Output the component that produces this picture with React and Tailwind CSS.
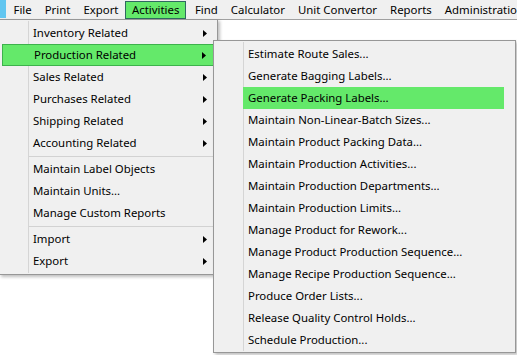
import React from "react";

const topMenu = ["File", "Print", "Export", "Activities", "Find", "Calculator", "Unit Convertor", "Reports", "Administration"];

const activities = [
  { label: "Inventory Related", sub: true },
  { label: "Production Related", sub: true, active: true },
  { label: "Sales Related", sub: true },
  { label: "Purchases Related", sub: true },
  { label: "Shipping Related", sub: true },
  { label: "Accounting Related", sub: true },
  { sep: true },
  { label: "Maintain Label Objects" },
  { label: "Maintain Units..." },
  { label: "Manage Custom Reports" },
  { sep: true },
  { label: "Import", sub: true },
  { label: "Export", sub: true },
];

const production = [
  "Estimate Route Sales...",
  "Generate Bagging Labels...",
  "Generate Packing Labels...",
  "Maintain Non-Linear-Batch Sizes...",
  "Maintain Product Packing Data...",
  "Maintain Production Activities...",
  "Maintain Production Departments...",
  "Maintain Production Limits...",
  "Manage Product for Rework...",
  "Manage Product Production Sequence...",
  "Manage Recipe Production Sequence...",
  "Produce Order Lists...",
  "Release Quality Control Holds...",
  "Schedule Production...",
];

const Arrow = () => (
  <svg width="4" height="7" viewBox="0 0 4 7" className="ml-auto">
    <path d="M0 0 L4 3.5 L0 7 Z" fill="#000" />
  </svg>
);

const App = () => {
  return (
    <div
      className="w-[517px] h-[355px] overflow-hidden bg-white text-black text-[11.4px] leading-none relative"
      style={{ fontFamily: '"Segoe UI", "Noto Sans", sans-serif' }}
    >
      {/* menu bar */}
      <div className="h-[20px] bg-[#f0f0f0] border-b border-[#a0a0a0] flex items-stretch">
        <div className="shrink-0 w-[6px] h-[18px] bg-[#62c6f0]" />
        <div className="flex items-stretch pt-[1px] pl-[1px] whitespace-nowrap">
          {topMenu.map((m) =>
            m === "Activities" ? (
              <div
                key={m}
                className="flex items-center px-[6px] mr-[2px] bg-[#64e96a] border border-[#2f6a60] h-[18px]"
              >
                {m}
              </div>
            ) : (
              <div key={m} className="flex items-center px-[6.5px] h-[18px]">
                {m}
              </div>
            )
          )}
        </div>
      </div>

      {/* activities dropdown */}
      <div className="absolute left-[-1px] top-[19px] w-[219px] bg-[#f0f0f0] border border-[#979797] p-[2px] shadow-[2px_2px_3px_rgba(0,0,0,0.25)]">
        <div className="absolute left-[28px] top-[1px] bottom-[1px] w-px bg-[#d5d5d5]" />
        {activities.map((it, i) =>
          it.sep ? (
            <div key={i} className="h-[4px] flex items-center pl-[27px]">
              <div className="relative h-px w-full bg-[#d2d2d2]" />
            </div>
          ) : (
            <div
              key={i}
              className={
                "relative h-[22px] flex items-center pl-[31px] pr-[8px] " +
                (it.active ? "bg-[#64e96a] border border-[#3db24c] pl-[30px] pr-[7px]" : "")
              }
            >
              <span>{it.label}</span>
              {it.sub && <Arrow />}
            </div>
          )
        )}
      </div>

      {/* production submenu */}
      <div className="absolute left-[213px] top-[40px] w-[303px] bg-[#f0f0f0] border border-[#979797] pt-[2px] pb-[1px] px-[2px] shadow-[2px_2px_3px_rgba(0,0,0,0.25)]">
        <div className="absolute left-[29px] top-[1px] bottom-[1px] w-px bg-[#d5d5d5]" />
        {production.map((label, i) =>
          i === 2 ? (
            <div key={i} className="relative h-[22px] flex items-center ml-[27px] w-[261px] pl-[5px] bg-[#64e96a]">
              {label}
            </div>
          ) : (
            <div key={i} className="relative h-[22px] flex items-center pl-[32px]">
              {label}
            </div>
          )
        )}
      </div>
    </div>
  );
};

export default App;
